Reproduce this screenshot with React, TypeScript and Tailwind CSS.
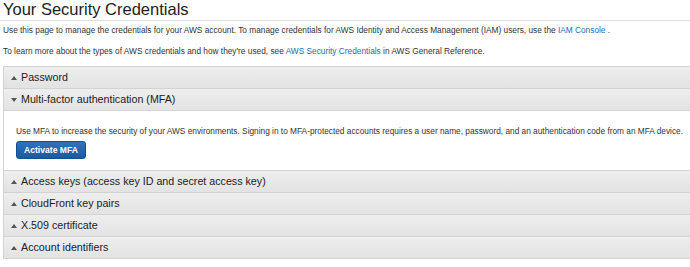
import React from "react";

interface Section {
  title: string;
  open?: boolean;
}

const sections: Section[] = [
  { title: "Password" },
  { title: "Multi-factor authentication (MFA)", open: true },
  { title: "Access keys (access key ID and secret access key)" },
  { title: "CloudFront key pairs" },
  { title: "X.509 certificate" },
  { title: "Account identifiers" },
];

function Caret({ open }: { open?: boolean }) {
  return (
    <svg width="6" height="4" viewBox="0 0 6 4" className="shrink-0 fill-[#555]">
      {open ? <polygon points="0,0 6,0 3,4" /> : <polygon points="0,4 6,4 3,0" />}
    </svg>
  );
}

function SectionRow({ section }: { section: Section }) {
  return (
    <div>
      <div className="flex h-[22px] items-center gap-[4px] border-t border-[#d3d3d3] bg-gradient-to-b from-[#eeeeee] to-[#e3e3e3] pl-[7px] text-[10.7px] text-[#222]">
        <Caret open={section.open} />
        <span>{section.title}</span>
      </div>
      {section.open && (
        <div className="border-t border-[#d3d3d3] bg-white pb-[11px] pl-[12px] pt-[15px] text-[8.3px] leading-[11px] text-[#333]">
          <p className="whitespace-nowrap">
            Use MFA to increase the security of your AWS environments. Signing in to MFA-protected accounts requires a
            user name, password, and an authentication code from an MFA device.
          </p>
          <button className="mt-[4px] block h-[18px] rounded-[3px] border border-[#0f4f8f] bg-gradient-to-b from-[#2e74bd] to-[#1a5aa0] px-[7px] text-[8.6px] font-bold text-white">
            Activate MFA
          </button>
        </div>
      )}
    </div>
  );
}

export default function App() {
  return (
    <div className="h-[267px] w-[690px] overflow-hidden bg-white font-['Liberation_Sans',Arial,sans-serif] text-[#333]">
      <h1 className="border-b border-[#dcdcdc] pb-[2px] pl-[3px] pt-[1px] text-[16.5px] leading-[17px] text-[#222]">
        Your Security Credentials
      </h1>
      <div className="pl-[3px] text-[8.3px] leading-[11px]">
        <p className="mt-[4px]">
          Use this page to manage the credentials for your AWS account. To manage credentials for AWS Identity and Access
          Management (IAM) users, use the <span className="text-[#1f6bb5]">IAM Console</span> .
        </p>
        <p className="mt-[10px]">
          To learn more about the types of AWS credentials and how they're used, see{" "}
          <span className="text-[#1f6bb5]">AWS Security Credentials</span> in AWS General Reference.
        </p>
      </div>
      <div className="ml-[3px] mt-[9px] border-b border-l border-[#d3d3d3]">
        {sections.map((s) => (
          <SectionRow key={s.title} section={s} />
        ))}
      </div>
    </div>
  );
}
